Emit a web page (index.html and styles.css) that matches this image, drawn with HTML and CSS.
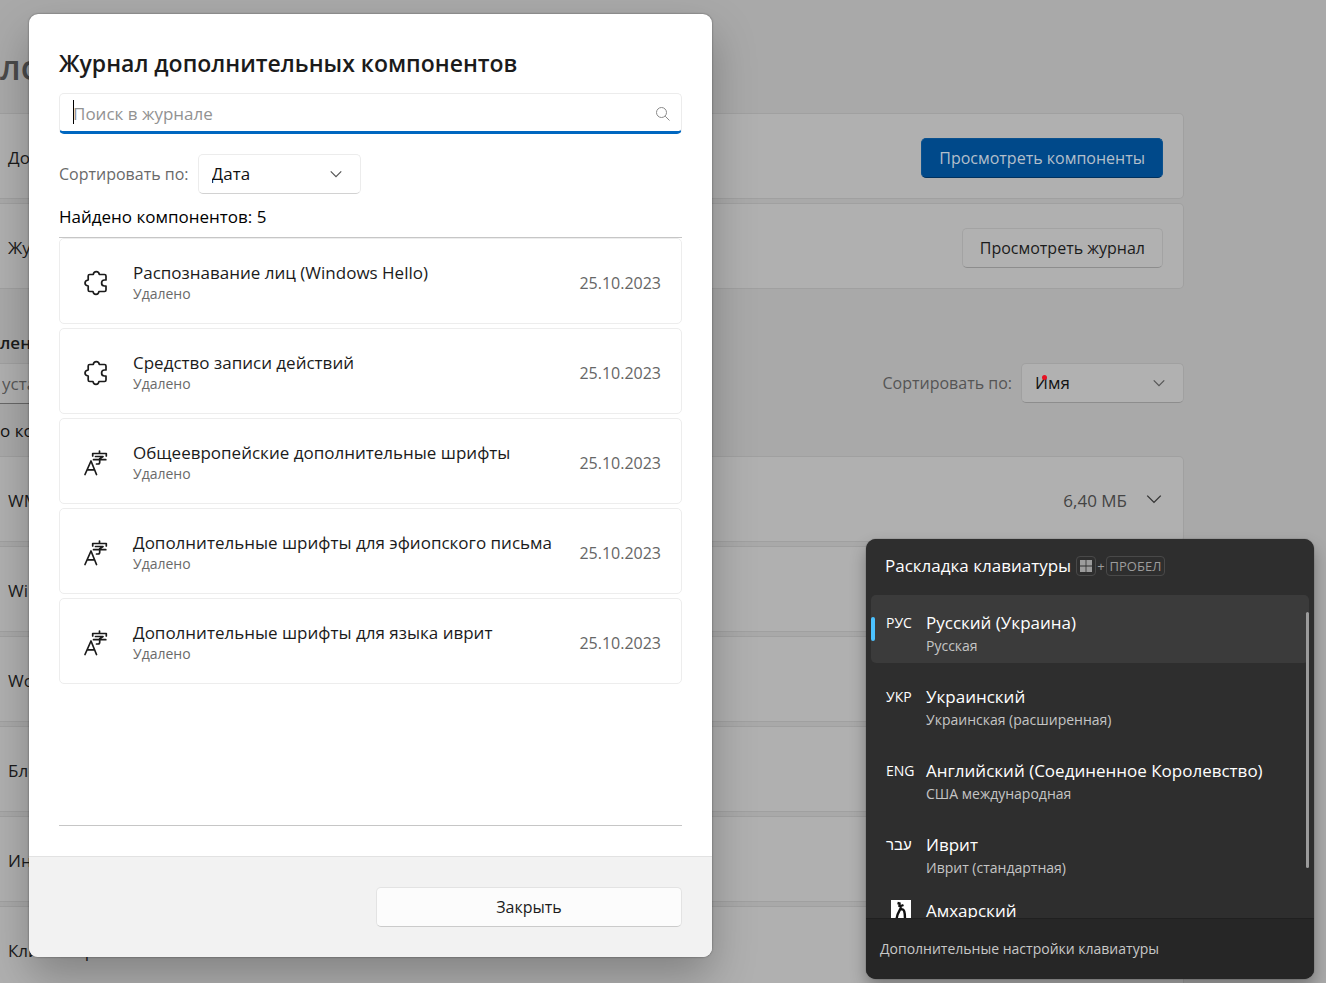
FILE: index.html
```html
<!DOCTYPE html>
<html lang="ru">
<head>
<meta charset="utf-8">
<title>Журнал дополнительных компонентов</title>
<link rel="stylesheet" href="styles.css">
</head>
<body>
<svg class="defs" aria-hidden="true">
  <symbol id="puzzle" viewBox="0 0 24 26">
    <path d="M4.200 6a1.500 1.500 0 0 1 1.500-1.500h3.600c.2-1.800 1.400-2.900 3-2.900s2.800 1.100 3 2.900h5.200A1.500 1.500 0 0 1 22 6v4h-1.500c-1.800 0-2.900 1.300-2.900 3s1.100 3 2.900 3H22v4a1.500 1.500 0 0 1-1.500 1.500h-5.600c-.2 1.800-1.300 2.900-2.900 2.900s-2.800-1.100-3-2.900H5.700A1.500 1.500 0 0 1 4.200 20v-4C2.300 15.700 1 14.700 1 13s1.300-2.700 3.200-3z"/>
  </symbol>
  <symbol id="fonts" viewBox="0 0 24 26">
    <path d="M1 24.500 7 11 12.500 24.500M3.300 19.800h7.300"/>
    <path d="M15.500 1v2.500M8.700 6V3.500h13.600V6M11.500 6.500h7.500l-3.300 2.200v3.600c0 1.300-.6 1.700-1.700 1.700h-1.500M9.500 9.700h12.300"/>
  </symbol>
  <symbol id="chevron" viewBox="0 0 16 16">
    <path d="M2 5l6 6 6-6"/>
  </symbol>
</svg>

<main class="page">
  <h1 class="page-title">ло</h1>
  <section class="cards">
    <div class="card"><span>До</span><button class="button primary">Просмотреть компоненты</button></div>
    <div class="card"><span>Жу</span><button class="button">Просмотреть журнал</button></div>
  </section>
  <h2 class="section-title">лен</h2>
  <div class="filter">
    <input class="filter-input" type="text" aria-label="Поиск" placeholder="уста">
    <div class="sort">
      <label for="sort-page">Сортировать по:</label>
      <span class="select"><select id="sort-page"><option>Имя</option></select><svg class="chevron"><use href="#chevron"/></svg><i class="dot"></i></span>
    </div>
  </div>
  <p class="count">о ко</p>
  <section class="cards">
    <div class="card"><span>WM</span><span class="size">6,40 МБ<svg class="chevron large"><use href="#chevron"/></svg></span></div>
    <div class="card"><span>Wi</span></div>
    <div class="card"><span>Wo</span></div>
    <div class="card"><span>Бло</span></div>
    <div class="card"><span>Ин</span></div>
    <div class="card"><span>Клиент Op</span></div>
  </section>
</main>

<div class="dialog" role="dialog" aria-labelledby="dialog-title">
  <div class="dialog-body">
    <h2 class="dialog-title" id="dialog-title">Журнал дополнительных компонентов</h2>
    <div class="search">
      <input type="text" aria-label="Поиск в журнале" placeholder="Поиск в журнале">
      <i class="caret"></i>
      <svg class="search-icon" viewBox="0 0 16 16"><circle cx="6.500" cy="6.500" r="5"/><path d="M10.200 10.200l4.300 4.300"/></svg>
    </div>
    <div class="sort">
      <label for="sort-log">Сортировать по:</label>
      <span class="select"><select id="sort-log"><option>Дата</option></select><svg class="chevron"><use href="#chevron"/></svg></span>
    </div>
    <p class="found">Найдено компонентов: 5</p>
    <ul class="log">
      <li class="entry"><svg class="entry-icon"><use href="#puzzle"/></svg><div class="entry-text"><span>Распознавание лиц (Windows Hello)</span><small>Удалено</small></div><time>25.10.2023</time></li>
      <li class="entry"><svg class="entry-icon"><use href="#puzzle"/></svg><div class="entry-text"><span>Средство записи действий</span><small>Удалено</small></div><time>25.10.2023</time></li>
      <li class="entry"><svg class="entry-icon"><use href="#fonts"/></svg><div class="entry-text"><span>Общеевропейские дополнительные шрифты</span><small>Удалено</small></div><time>25.10.2023</time></li>
      <li class="entry"><svg class="entry-icon"><use href="#fonts"/></svg><div class="entry-text"><span>Дополнительные шрифты для эфиопского письма</span><small>Удалено</small></div><time>25.10.2023</time></li>
      <li class="entry"><svg class="entry-icon"><use href="#fonts"/></svg><div class="entry-text"><span>Дополнительные шрифты для языка иврит</span><small>Удалено</small></div><time>25.10.2023</time></li>
    </ul>
  </div>
  <footer class="dialog-footer"><button class="close">Закрыть</button></footer>
</div>

<aside class="flyout">
  <header class="flyout-header">
    <span>Раскладка клавиатуры</span>
    <span class="keys"><kbd><svg class="win" viewBox="0 0 12 12"><path d="M0 0h5.600v5.600H0zM6.400 0H12v5.600H6.400zM0 6.400h5.600V12H0zM6.400 6.400H12V12H6.400z"/></svg></kbd>+<kbd>ПРОБЕЛ</kbd></span>
  </header>
  <ul class="layouts">
    <li class="layout active"><span class="code">РУС</span><div><span>Русский (Украина)</span><small>Русская</small></div></li>
    <li class="layout"><span class="code">УКР</span><div><span>Украинский</span><small>Украинская (расширенная)</small></div></li>
    <li class="layout"><span class="code">ENG</span><div><span>Английский (Соединенное Королевство)</span><small>США международная</small></div></li>
    <li class="layout"><span class="code" lang="he">עבר</span><div><span>Иврит</span><small>Иврит (стандартная)</small></div></li>
    <li class="layout compact"><span class="code"><svg class="amharic" viewBox="0 0 20 20"><path class="tile" d="M0 0h20v20H0z"/><path d="M6.500 3l2 .5v3.500M8.500 6.500l4-1.500M10 7c-.5 4-4 5-4.500 13M9.500 9.500c4-1.500 4.500 3 4.500 10.500"/></svg></span><div><span>Амхарский</span></div></li>
  </ul>
  <i class="scrollbar"></i>
  <footer class="flyout-footer"><a href="#">Дополнительные настройки клавиатуры</a></footer>
</aside>
</body>
</html>
```
FILE: styles.css
```css
* { box-sizing: border-box; }

body {
  margin: 0;
  height: 100vh;
  overflow: hidden;
  position: relative;
  background: #a9a9a9;
  color: #1b1b1b;
  font: 17px/24px "Open Sans", "Noto Sans", sans-serif;
}

h1, h2, p, ul { margin: 0; padding: 0; }
ul { list-style: none; }
button, input, select { font: inherit; color: inherit; }
svg { fill: none; stroke: currentColor; }
.defs { position: absolute; width: 0; height: 0; }

.page { padding: 45px 142px 0 0; }
.page-title { font-size: 34px; line-height: 44px; font-weight: 600; color: #4a4a4a; }
.cards { display: flex; flex-direction: column; gap: 4px; }
.page-title + .cards { margin-top: 24px; }
.card {
  display: flex;
  align-items: center;
  justify-content: space-between;
  height: 86px;
  padding: 3px 20px 0 8px;
  background: #b0b0b0;
  border: 1px solid #a0a0a0;
  border-left: 0;
  border-radius: 0 5px 5px 0;
}
.button {
  height: 40px;
  padding: 0 17px;
  border: 1px solid #a3a3a3;
  border-bottom-color: #8d8d8d;
  border-radius: 5px;
  background: #b1b1b1;
  font-size: 16px;
}
.primary { background: #00498a; border-color: #0b518e; border-bottom-color: #00315e; color: #b3bfca; }
.section-title { margin-top: 42px; font-size: 17px; line-height: 24px; font-weight: 600; }
.filter { display: flex; justify-content: space-between; align-items: flex-start; margin-top: 8px; }
.filter-input {
  width: 340px;
  height: 41px;
  padding: 0 2px;
  border: 1px solid #a0a0a0;
  border-width: 1px 0 1px;
  border-bottom-color: #686868;
  background: #b0b0b0;
}
.filter-input::placeholder { color: #585858; opacity: 1; }
.count { margin: 15px 0 13px; color: #111; }
.size { display: flex; align-items: center; gap: 18px; color: #444; }

.sort { display: flex; align-items: center; gap: 9px; color: #6a6a6a; font-size: 16px; }
.page .sort { color: #555; }
.select { position: relative; display: block; width: 163px; color: #111; font-size: 17px; }
.select select {
  display: block;
  width: 100%;
  height: 40px;
  padding: 0 13px;
  appearance: none;
  border: 1px solid #ececec;
  border-bottom-color: #d2d2d2;
  border-radius: 5px;
  background: #fff;
}
.page .select select { background: #b1b1b1; border-color: #a0a0a0; border-bottom-color: #8d8d8d; }
.chevron { width: 14px; height: 14px; stroke-width: 1.400; color: #555; }
.select .chevron { position: absolute; right: 18px; top: 13px; }
.chevron.large { width: 18px; height: 18px; margin-bottom: 4px; stroke-width: 1.200; color: #333; }
.dot { position: absolute; left: 21px; top: 12px; width: 5px; height: 5px; border-radius: 50%; background: #e81123; }

.dialog {
  position: absolute;
  left: 29px;
  top: 14px;
  width: calc(100% - 58px);
  max-width: 683px;
  overflow: hidden;
  border-radius: 9px;
  background: #fff;
  box-shadow: 0 0 2px rgba(0, 0, 0, .5), 0 20px 44px rgba(0, 0, 0, .26);
}
.dialog-body { padding: 32px 30px 30px; }
.dialog-title { font-size: 23px; line-height: 34px; font-weight: 600; }
.search { position: relative; margin: 13px 0 20px; }
.search input {
  display: block;
  width: 100%;
  height: 41px;
  padding: 2px 40px 0 13px;
  border: 1px solid #ececec;
  border-bottom: 3px solid #0067c0;
  border-radius: 5px;
  outline: 0;
}
.search input::placeholder { color: #929292; opacity: 1; }
.caret { position: absolute; left: 14px; top: 7px; width: 1px; height: 24px; background: #000; }
.search-icon { position: absolute; right: 11px; top: 13px; width: 16px; height: 16px; color: #8a8a8a; }
.found { margin: 11px 0 8px; color: #000; }
.log {
  display: flex;
  flex-direction: column;
  gap: 4px;
  min-height: 589px;
  border-top: 1px solid #c6c6c6;
  border-bottom: 1px solid #c6c6c6;
}
.entry {
  display: flex;
  align-items: center;
  height: 86px;
  padding: 4px 20px 0 24px;
  border: 1px solid #ededed;
  border-radius: 5px;
}
.entry-icon { flex: none; width: 24px; height: 26px; margin-right: 25px; stroke-width: 1.700; stroke-linejoin: round; stroke-linecap: round; }
.entry-text { flex: 1; }
.entry-text span, .entry-text small, .layout div span, .layout small { display: block; }
.entry-text span { line-height: 22px; }
small { font-size: 14px; line-height: 20px; color: #6a6a6a; }
.entry time { font-size: 16px; color: #666; }
.dialog-footer {
  display: flex;
  justify-content: flex-end;
  padding: 30px;
  border-top: 1px solid #e2e2e2;
  background: #f2f2f2;
}
.close {
  width: 306px;
  height: 40px;
  border: 1px solid #e3e3e3;
  border-bottom-color: #cbcbcb;
  border-radius: 5px;
  background: #fcfcfc;
  font-size: 16px;
}

.flyout {
  position: absolute;
  right: 12px;
  bottom: 4px;
  width: 448px;
  overflow: hidden;
  border-radius: 10px;
  background: #2e2e2e;
  color: #fff;
  box-shadow: 0 0 1px #222, 0 8px 16px rgba(0, 0, 0, .3);
}
.flyout-header { display: flex; align-items: center; gap: 5px; height: 56px; padding: 0 19px 2px; }
.keys { display: flex; align-items: center; gap: 1px; font-size: 13px; line-height: 18px; color: #9c9c9c; }
kbd {
  display: flex;
  align-items: center;
  height: 20px;
  padding: 0 3px;
  border: 1px solid #494949;
  border-radius: 4px;
  font: inherit;
}
.win { width: 12px; height: 12px; fill: #9c9c9c; stroke: none; }
.layouts { display: flex; flex-direction: column; gap: 6px; height: 323px; padding: 0 5px; overflow: hidden; }
.layout { position: relative; flex: none; display: flex; height: 68px; padding: 16px 0 0 15px; border-radius: 5px; }
.layout.active { background: #3b3b3b; }
.layout.active::before { content: ""; position: absolute; left: 0; top: 22px; width: 4px; height: 24px; border-radius: 2px; background: #4cc2ff; }
.layout.compact { padding-top: 8px; }
.code { width: 40px; font-size: 14px; }
.code[lang="he"] { font-family: "Liberation Sans", sans-serif; font-size: 15px; }
.amharic { display: block; width: 20px; height: 20px; margin: 1px 0 0 5px; color: #111; stroke-width: 2.400; }
.tile { fill: #fff; stroke: none; }
.layout small { line-height: 22px; color: #c5c5c5; }
.scrollbar { position: absolute; right: 5px; top: 73px; width: 3px; height: 256px; border-radius: 2px; background: #9b9b9b; }
.flyout-footer { height: 61px; padding: 18px 14px; border-top: 1px solid #202020; background: #262626; font-size: 14px; }
.flyout-footer a { color: #c8c8c8; text-decoration: none; }
```
